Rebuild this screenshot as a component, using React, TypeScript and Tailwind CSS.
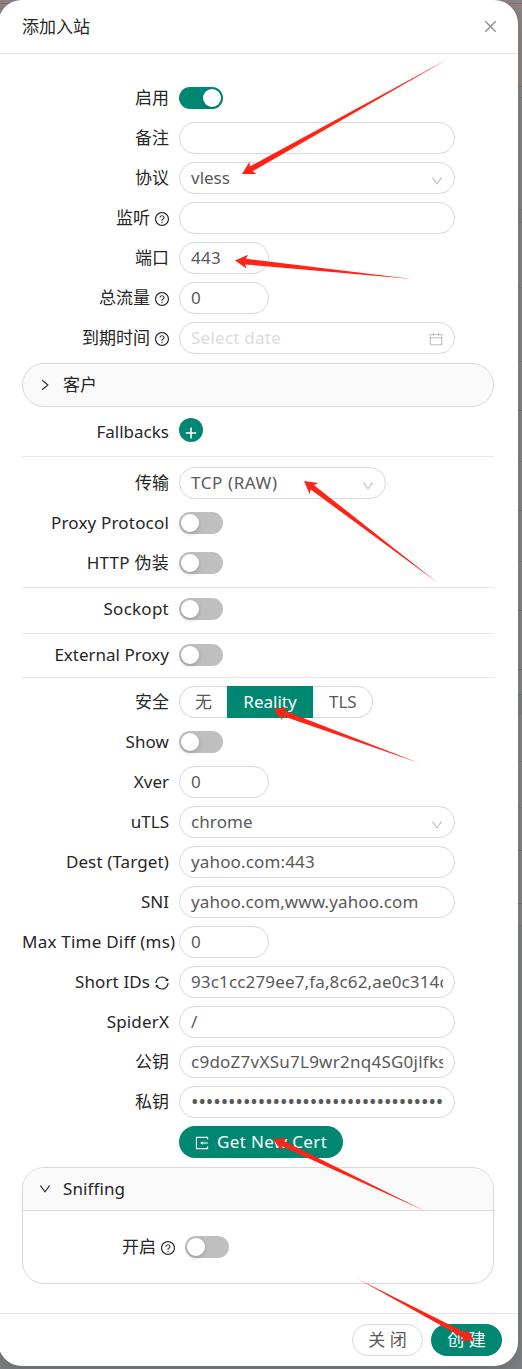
import React from "react";
import {
  AiOutlineCalendar,
  AiOutlineClose,
  AiOutlineDown,
  AiOutlineQuestionCircle,
  AiOutlineRight,
  AiOutlineSync,
} from "react-icons/ai";

const FONT = "font-['Noto_Sans','Noto_Sans_CJK_SC',sans-serif]";

function Row({
  label,
  icon,
  ls = "",
  children,
  height = "h-10",
}: {
  label?: string;
  icon?: React.ReactNode;
  ls?: string;
  children: React.ReactNode;
  height?: string;
}) {
  return (
    <div className={`flex items-center ${height}`}>
      <div className="mr-[10px] w-[147px] shrink-0 whitespace-nowrap text-right text-[#262626]">
        <span className={ls}>{label}</span>
        {icon && <span className="-mr-px ml-1 inline-block align-[-3px] text-[16px]">{icon}</span>}
      </div>
      {children}
    </div>
  );
}

function Field({
  value,
  width = "w-[276px]",
  ls = "",
  muted = false,
  suffix,
}: {
  value?: string;
  width?: string;
  ls?: string;
  muted?: boolean;
  suffix?: React.ReactNode;
}) {
  return (
    <div className={`flex h-8 items-center rounded-full border border-[#d9d9d9] bg-white px-[11px] ${width}`}>
      <span
        className={`min-w-0 flex-1 overflow-hidden whitespace-nowrap ${muted ? "text-[#dcdcdc]" : "text-[#595959]"} ${ls}`}
      >
        {value}
      </span>
      {suffix}
    </div>
  );
}

function Switch({ on = false }: { on?: boolean }) {
  return (
    <div className={`flex h-[22px] w-11 items-center rounded-full px-[2px] ${on ? "justify-end bg-[#008771]" : "bg-[#bfbfbf]"}`}>
      <div className="h-[18px] w-[18px] rounded-full bg-white shadow-[0_2px_4px_rgba(0,35,11,0.2)]" />
    </div>
  );
}

const Help = <AiOutlineQuestionCircle />;
const Caret = <AiOutlineDown className="mt-[5px] -mr-px h-[14px] w-[14px] text-[#bfbfbf]" />;
const Divider = () => <div className="h-px shrink-0 bg-[#e8e8e8]" />;

function ImportIcon() {
  return (
    <svg className="mt-[2px] h-[14px] w-[14px]" viewBox="0 0 14 14" fill="none" stroke="currentColor" strokeWidth="1.1">
      <path d="M12.6 3.6V1.4H1.4v11.2h11.2v-2.2" />
      <path d="M12.8 7H6.5" />
      <path d="M7.6 5.2v3.6L5.2 7z" fill="currentColor" stroke="none" />
    </svg>
  );
}

function Arrow({ tip, tail }: { tip: [number, number]; tail: [number, number] }) {
  const dx = tail[0] - tip[0];
  const dy = tail[1] - tip[1];
  const len = Math.hypot(dx, dy);
  const at = (d: number, o: number) =>
    `${tip[0] + (dx * d - dy * o) / len},${tip[1] + (dy * d + dx * o) / len}`;
  const points = [at(0, 0), at(12.5, -7), at(10.5, -2.8), at(len, 0), at(10.5, 2.8), at(12.5, 7)].join(" ");
  return <polygon points={points} fill="#ff2415" />;
}

function Backdrop() {
  return (
    <div className="absolute inset-0 flex flex-col bg-[#7d7e80]">
      <div className="h-[3px] bg-[#828588]" />
      <div className="h-[84px] border-y border-[#a45e5e] bg-[#8e8280]" />
      <div className="h-[11px] border-b border-[#777879] bg-[#828486]" />
      <div className="h-[112px] border-b border-[#787878] bg-[#838383]" />
      <div className="h-[13px] border-b border-[#787878] bg-[#7f7f7f]" />
      <div className="h-[65px] border-b border-[#787878] bg-[#838383]" />
      <div className="h-[74px] border-b border-[#787878] bg-[#838383]" />
      <div className="h-[49px] border-b border-[#707070] bg-[#838383]" />
      <div className="h-[51px] border-b border-[#787878] bg-[#838383]" />
      <div className="h-[49px] border-b border-[#707070] bg-[#838383]" />
      <div className="h-[51px] border-b border-[#787878] bg-[#838383]" />
      <div className="h-[49px] border-b border-[#707070] bg-[#838383]" />
      <div className="h-[59px] border-b border-[#707070] bg-[#838383]" />
      <div className="h-[25px] border-b border-[#727476] bg-[#838383]" />
      <div className="h-[20px] bg-[#7b7e81]" />
      <div className="h-[47px] border-b border-[#787878] bg-[#838383]" />
      <div className="h-[46px] border-b border-[#787878] bg-[#838383]" />
      <div className="h-[43px] border-b border-[#707070] bg-[#838383]" />
      <div className="h-[53px] border-b border-[#707070] bg-[#838383]" />
      <div className="h-[22px] border-b border-[#787878] bg-[#838383]" />
    </div>
  );
}

export default function App() {
  return (
    <div className={`relative h-[1369px] w-[522px] overflow-hidden text-[17px] leading-6 ${FONT}`}>
      <Backdrop />
      <div className="relative -ml-[2px] flex h-[1366px] w-[520px] flex-col rounded-[24px] bg-white shadow-[0_4px_12px_rgba(0,0,0,0.15)]">
        <header className="flex h-[54px] items-center justify-between border-b border-[#e8e8e8] pl-6 pr-[19px]">
          <h1 className="text-[#262626]">添加入站</h1>
          <AiOutlineClose className="h-[17px] w-[17px] text-[#8c8c8c]" />
        </header>
        <main className="flex h-[1259px] flex-col px-6 pt-6">
          <Row label="启用"><Switch on /></Row>
          <Row label="备注"><Field /></Row>
          <Row label="协议"><Field value="vless" suffix={Caret} /></Row>
          <Row label="监听" icon={Help}><Field /></Row>
          <Row label="端口"><Field value="443" width="w-[90px]" ls="tracking-[0.3px]" /></Row>
          <Row label="总流量" icon={Help}><Field value="0" width="w-[90px]" /></Row>
          <Row label="到期时间" icon={Help}>
            <Field
              value="Select date"
              muted
              ls="tracking-[0.25px]"
              suffix={<AiOutlineCalendar className="-mr-px mt-[2px] h-4 w-4 text-[#bfbfbf]" />}
            />
          </Row>
          <section className="mt-[5px] flex h-11 shrink-0 items-center rounded-[22px] border border-[#d9d9d9] bg-[#fafafa] pl-[15px] text-[#262626]">
            <AiOutlineRight className="h-[14px] w-[14px]" />
            <span className="ml-[11px]">客户</span>
          </section>
          <div className="pt-1 pb-1">
            <Row label="Fallbacks" height="h-[41px]">
              <div className="-mt-[3px] flex h-6 w-6 items-center justify-center rounded-full bg-[#008771] text-white">
                <svg className="mt-[5px] h-3 w-3" viewBox="0 0 12 12" stroke="currentColor" strokeWidth="1.6">
                  <path d="M6 0.5v11M0.8 6h10.4" />
                </svg>
              </div>
            </Row>
          </div>
          <Divider />
          <div className="pt-[6px] pb-1">
            <Row label="传输"><Field value="TCP (RAW)" width="w-[207px]" ls="tracking-[0.6px]" suffix={Caret} /></Row>
            <Row label="Proxy Protocol" ls="tracking-[0.18px]"><Switch /></Row>
            <Row label="HTTP 伪装" ls="tracking-[0.25px]"><Switch /></Row>
          </div>
          <Divider />
          <div className="pb-[3px]">
            <Row label="Sockopt" ls="tracking-[0.25px]" height="h-[42px]"><Switch /></Row>
          </div>
          <Divider />
          <div className="pb-px">
            <Row label="External Proxy" height="h-[42px]"><Switch /></Row>
          </div>
          <Divider />
          <div className="pt-1">
            <Row label="安全">
              <div className="flex h-8 text-[#595959]">
                <div className="flex w-12 items-center rounded-l-full border border-r-0 border-[#d9d9d9] pl-[15px]">无</div>
                <div className="flex w-[86px] items-center justify-center bg-[#008771] text-white">Reality</div>
                <div className="flex w-[60px] items-center rounded-r-full border border-l-0 border-[#d9d9d9] pl-4">TLS</div>
              </div>
            </Row>
            <Row label="Show" ls="tracking-[0.1px]"><Switch /></Row>
            <Row label="Xver"><Field value="0" width="w-[90px]" /></Row>
            <Row label="uTLS"><Field value="chrome" ls="tracking-[0.1px]" suffix={Caret} /></Row>
            <Row label="Dest (Target)" ls="tracking-[0.12px]"><Field value="yahoo.com:443" ls="tracking-[0.15px]" /></Row>
            <Row label="SNI"><Field value="yahoo.com,www.yahoo.com" ls="tracking-[0.11px]" /></Row>
            <Row label="Max Time Diff (ms)" ls="tracking-[0.23px]"><Field value="0" width="w-[90px]" /></Row>
            <Row label="Short IDs" ls="tracking-[0.1px]" icon={<AiOutlineSync />}>
              <Field value="93c1cc279ee7,fa,8c62,ae0c314d" ls="tracking-[0.15px]" />
            </Row>
            <Row label="SpiderX" ls="tracking-[0.15px]"><Field value="/" /></Row>
            <Row label="公钥"><Field value="c9doZ7vXSu7L9wr2nq4SG0jlfks" ls="tracking-[0.25px]" /></Row>
            <Row label="私钥"><Field value="••••••••••••••••••••••••••••••••••" ls="text-[20px] tracking-[-0.1px]" /></Row>
            <Row>
              <button className="flex h-8 w-[164px] items-center rounded-full bg-[#008771] pl-4 text-white">
                <ImportIcon />
                <span className="ml-2 whitespace-nowrap tracking-[0.35px]">Get New Cert</span>
              </button>
            </Row>
          </div>
          <section className="mt-[5px] h-[117px] shrink-0 rounded-[22px] border border-[#d9d9d9] text-[#262626]">
            <div className="flex h-[43px] items-center rounded-t-[21px] border-b border-[#d9d9d9] bg-[#fafafa] pl-[15px]">
              <AiOutlineDown className="h-[14px] w-[14px]" />
              <span className="ml-[11px] tracking-[0.1px]">Sniffing</span>
            </div>
            <div className="pl-[5px] pt-4">
              <Row label="开启" icon={Help}><Switch /></Row>
            </div>
          </section>
        </main>
        <footer className="flex h-[53px] justify-end gap-2 border-t border-[#e8e8e8] pr-4 pt-[10px]">
          <button className="h-8 w-[71px] rounded-full border border-[#d9d9d9] text-[#595959]">关 闭</button>
          <button className="h-8 w-[71px] rounded-full bg-[#008771] text-white">创 建</button>
        </footer>
      </div>
      <svg className="pointer-events-none absolute inset-0" width="522" height="1369">
        <Arrow tip={[242, 174]} tail={[448, 59]} />
        <Arrow tip={[235, 260.5]} tail={[412, 279]} />
        <Arrow tip={[304, 481]} tail={[438, 583]} />
        <Arrow tip={[273, 709.5]} tail={[419, 763]} />
        <Arrow tip={[273, 1139]} tail={[425, 1211]} />
        <Arrow tip={[474, 1340.5]} tail={[358, 1279]} />
      </svg>
    </div>
  );
}
